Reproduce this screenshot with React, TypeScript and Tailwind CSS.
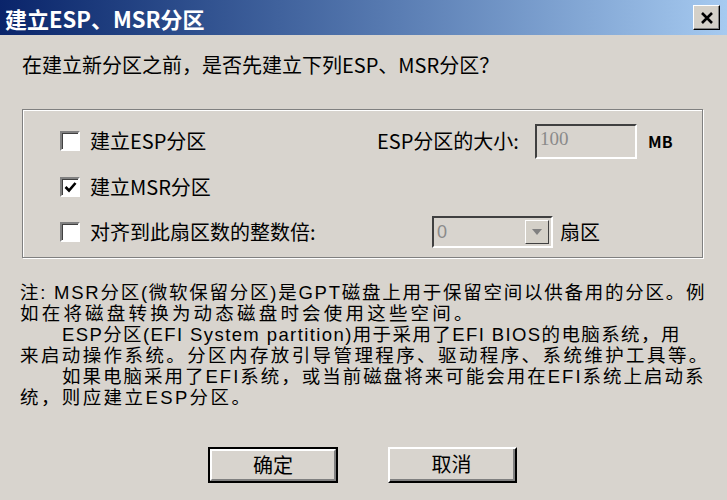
import React from 'react';

const font = { fontFamily: '"Noto Sans CJK SC", "Noto Sans", sans-serif' };
const noteFont = { fontFamily: '"Liberation Sans", "Noto Sans CJK SC", sans-serif' };

const Check = ({ checked }: { checked?: boolean }) => (
  <span className="flex h-[20px] w-[20px] items-center justify-center border-2 border-t-[#808080] border-l-[#808080] border-b-white border-r-white bg-white shadow-[inset_1px_1px_0_#404040]">
    {checked && (
      <svg width="13" height="12" viewBox="0 0 13 12">
        <path d="M1.5 6 L5 9.5 L11.5 2" fill="none" stroke="#000" strokeWidth="2.6" />
      </svg>
    )}
  </span>
);

const noteLines = [
  { text: '注: MSR分区(微软保留分区)是GPT磁盘上用于保留空间以供备用的分区。例', cls: 'tracking-[1.75px]' },
  { text: '如在将磁盘转换为动态磁盘时会使用这些空间。', cls: 'tracking-[3.2px]' },
  { text: 'ESP分区(EFI System partition)用于采用了EFI BIOS的电脑系统，用', cls: 'pl-[42px] tracking-[1.4px]' },
  { text: '来启动操作系统。分区内存放引导管理程序、驱动程序、系统维护工具等。', cls: 'tracking-[2.4px]' },
  { text: '如果电脑采用了EFI系统，或当前磁盘将来可能会用在EFI系统上启动系', cls: 'pl-[42px] tracking-[2px]' },
  { text: '统，则应建立ESP分区。', cls: 'tracking-[2.4px]' },
];

export default function App() {
  return (
    <div className="flex h-[500px] w-[727px] flex-col overflow-hidden bg-[#d8d4ce] text-black" style={font}>
      {/* title bar */}
      <div className="flex h-[35px] shrink-0 items-center justify-between bg-gradient-to-r from-[#0a246a] to-[#a6caf0] pl-[5px] pr-[7px]">
        <span className="text-[22px] font-bold leading-none text-white">建立ESP、MSR分区</span>
        <button className="flex h-[25px] w-[27px] items-center justify-center border border-b-black border-r-black border-t-white border-l-white bg-[#d4d0c8] shadow-[inset_-1px_-1px_0_#808080]">
          <svg width="14" height="12" viewBox="0 0 14 12">
            <path d="M2 1 L12 11 M12 1 L2 11" stroke="#000" strokeWidth="2.6" />
          </svg>
        </button>
      </div>

      <div className="flex flex-col pl-[22px]">
        <p className="mt-[16px] text-[20px] leading-[28px]">在建立新分区之前，是否先建立下列ESP、MSR分区？</p>

        {/* group box */}
        <div className="mt-[30px] flex h-[149px] w-[681px] flex-col border border-[#808080] pl-[37px] pt-[13px] shadow-[inset_1px_1px_0_#fff,1px_1px_0_#fff]">
          <div className="flex h-[36px] items-center">
            <div className="flex w-[317px] items-center gap-[10px]">
              <Check />
              <span className="text-[20px]">建立ESP分区</span>
            </div>
            <span className="w-[158px] text-[20px]">ESP分区的大小:</span>
            <div className="flex h-[35px] w-[102px] items-start border-2 border-t-[#404040] border-l-[#404040] border-b-white border-r-white pl-[3px]">
              <span className="text-[19px] leading-[26px] text-[#8a8a8a]" style={{ fontFamily: '"Liberation Serif", serif' }}>100</span>
            </div>
            <span className="ml-[11px] text-[16px] font-bold">MB</span>
          </div>

          <div className="mt-[10px] flex h-[36px] items-center gap-[10px]">
            <Check checked />
            <span className="text-[20px]">建立MSR分区</span>
          </div>

          <div className="mt-[10px] flex h-[34px] items-center">
            <div className="flex w-[372px] items-center gap-[10px]">
              <Check />
              <span className="text-[20px]">对齐到此扇区数的整数倍:</span>
            </div>
            <div className="flex h-[32px] w-[121px] items-center justify-between border-2 border-t-[#404040] border-l-[#404040] border-b-white border-r-white pl-[3px] pr-[2px]">
              <span className="text-[18px] leading-none text-[#8a8a8a]" style={{ fontFamily: '"Liberation Sans", sans-serif' }}>0</span>
              <span className="flex h-[24px] w-[24px] items-center justify-center border border-t-white border-l-white border-b-[#404040] border-r-[#404040] bg-[#d4d0c8]">
                <svg width="10" height="6" viewBox="0 0 10 6">
                  <path d="M0 0 H10 L5 6 Z" fill="#808080" />
                </svg>
              </span>
            </div>
            <span className="ml-[7px] text-[20px]">扇区</span>
          </div>
        </div>

        {/* notes */}
        <div className="-ml-[2px] mt-[24px] flex flex-col text-[18.5px] leading-[21px]" style={noteFont}>
          {noteLines.map((l, i) => (
            <p key={i} className={`whitespace-nowrap ${l.cls}`}>{l.text}</p>
          ))}
        </div>

        {/* buttons */}
        <div className="mt-[39px] flex gap-[50px] pl-[186px]">
          <button className="h-[36px] w-[130px] border-2 border-black">
            <span className="flex h-full w-full items-center justify-center border-2 border-t-white border-l-white border-b-[#808080] border-r-[#808080] text-[20px]">确定</span>
          </button>
          <button className="h-[36px] w-[129px] border-2 border-t-white border-l-white border-b-black border-r-black">
            <span className="flex h-full w-full items-center justify-center border-b-2 border-r-2 border-b-[#808080] border-r-[#808080] text-[20px]">取消</span>
          </button>
        </div>
      </div>
    </div>
  );
}
